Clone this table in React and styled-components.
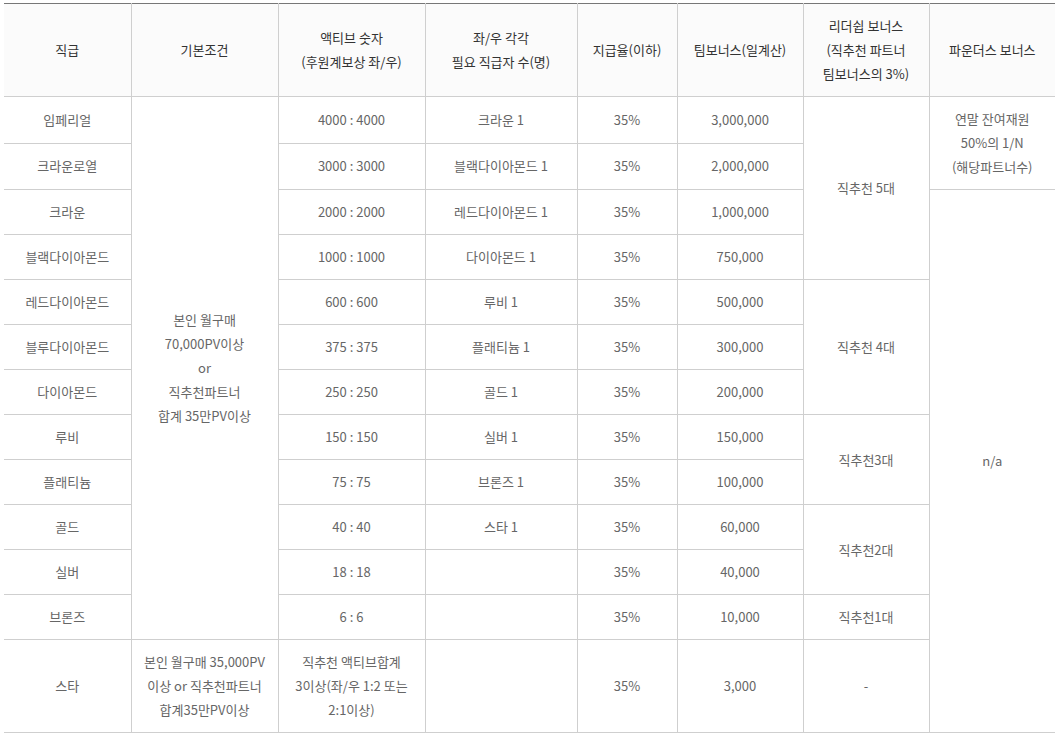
import React from "react";
import styled, { createGlobalStyle } from "styled-components";

const GlobalStyle = createGlobalStyle`
  body {
    margin: 0;
    background: #fff;
    font-family: "Noto Sans CJK KR", "Noto Sans", sans-serif;
  }
`;

const Wrap = styled.div`
  padding: 3px 5px 0 4px;
`;

const Table = styled.table`
  width: 1051px;
  border-collapse: collapse;
  table-layout: fixed;
  border-left: hidden;
  border-right: hidden;
  font-size: 13px;
  line-height: 24px;
  text-align: center;
`;

const HeadCell = styled.th`
  background: #fbfbfb;
  color: #333;
  font-weight: 400;
  padding: 10px 4px;
  border: 1px solid #cfcfcf;
  border-top: 1px solid #777;
  vertical-align: middle;
`;

const Cell = styled.td`
  color: #666;
  padding: 10px 4px;
  border: 1px solid #cfcfcf;
  vertical-align: middle;
`;

const widths = [127, 147, 147, 152, 100, 126, 126, 126];

const ranks = [
  ["임페리얼", "4000 : 4000", "크라운 1", "3,000,000"],
  ["크라운로열", "3000 : 3000", "블랙다이아몬드 1", "2,000,000"],
  ["크라운", "2000 : 2000", "레드다이아몬드 1", "1,000,000"],
  ["블랙다이아몬드", "1000 : 1000", "다이아몬드 1", "750,000"],
  ["레드다이아몬드", "600 : 600", "루비 1", "500,000"],
  ["블루다이아몬드", "375 : 375", "플래티늄 1", "300,000"],
  ["다이아몬드", "250 : 250", "골드 1", "200,000"],
  ["루비", "150 : 150", "실버 1", "150,000"],
  ["플래티늄", "75 : 75", "브론즈 1", "100,000"],
  ["골드", "40 : 40", "스타 1", "60,000"],
  ["실버", "18 : 18", "", "40,000"],
  ["브론즈", "6 : 6", "", "10,000"],
];

// leadership bonus groups start at these row indexes
const leader = {
  0: { span: 4, text: "직추천 5대" },
  4: { span: 3, text: "직추천 4대" },
  7: { span: 2, text: "직추천3대" },
  9: { span: 2, text: "직추천2대" },
  11: { span: 1, text: "직추천1대" },
};

const Lines = ({ items }) =>
  items.map((t, i) => (
    <React.Fragment key={i}>
      {i > 0 && <br />}
      {t}
    </React.Fragment>
  ));

export default function App() {
  return (
    <Wrap>
      <GlobalStyle />
      <Table>
        <colgroup>
          {widths.map((w, i) => (
            <col key={i} style={{ width: w }} />
          ))}
        </colgroup>
        <thead>
          <tr>
            <HeadCell>직급</HeadCell>
            <HeadCell>기본조건</HeadCell>
            <HeadCell>
              <Lines items={["액티브 숫자", "(후원계보상 좌/우)"]} />
            </HeadCell>
            <HeadCell>
              <Lines items={["좌/우 각각", "필요 직급자 수(명)"]} />
            </HeadCell>
            <HeadCell>지급율(이하)</HeadCell>
            <HeadCell>팀보너스(일계산)</HeadCell>
            <HeadCell>
              <Lines items={["리더쉽 보너스", "(직추천 파트너", "팀보너스의 3%)"]} />
            </HeadCell>
            <HeadCell>파운더스 보너스</HeadCell>
          </tr>
        </thead>
        <tbody>
          {ranks.map(([rank, active, need, team], i) => (
            <tr key={rank}>
              <Cell>{rank}</Cell>
              {i === 0 && (
                <Cell rowSpan={12}>
                  <Lines
                    items={["본인 월구매", "70,000PV이상", "or", "직추천파트너", "합계 35만PV이상"]}
                  />
                </Cell>
              )}
              <Cell>{active}</Cell>
              <Cell>{need}</Cell>
              <Cell>35%</Cell>
              <Cell>{team}</Cell>
              {leader[i] && <Cell rowSpan={leader[i].span}>{leader[i].text}</Cell>}
              {i === 0 && (
                <Cell rowSpan={2}>
                  <Lines items={["연말 잔여재원", "50%의 1/N", "(해당파트너수)"]} />
                </Cell>
              )}
              {i === 2 && <Cell rowSpan={11}>n/a</Cell>}
            </tr>
          ))}
          <tr>
            <Cell>스타</Cell>
            <Cell>
              <Lines items={["본인 월구매 35,000PV", "이상 or 직추천파트너", "합계35만PV이상"]} />
            </Cell>
            <Cell>
              <Lines items={["직추천 액티브합계", "3이상(좌/우 1:2 또는", "2:1이상)"]} />
            </Cell>
            <Cell></Cell>
            <Cell>35%</Cell>
            <Cell>3,000</Cell>
            <Cell>-</Cell>
          </tr>
        </tbody>
      </Table>
    </Wrap>
  );
}
